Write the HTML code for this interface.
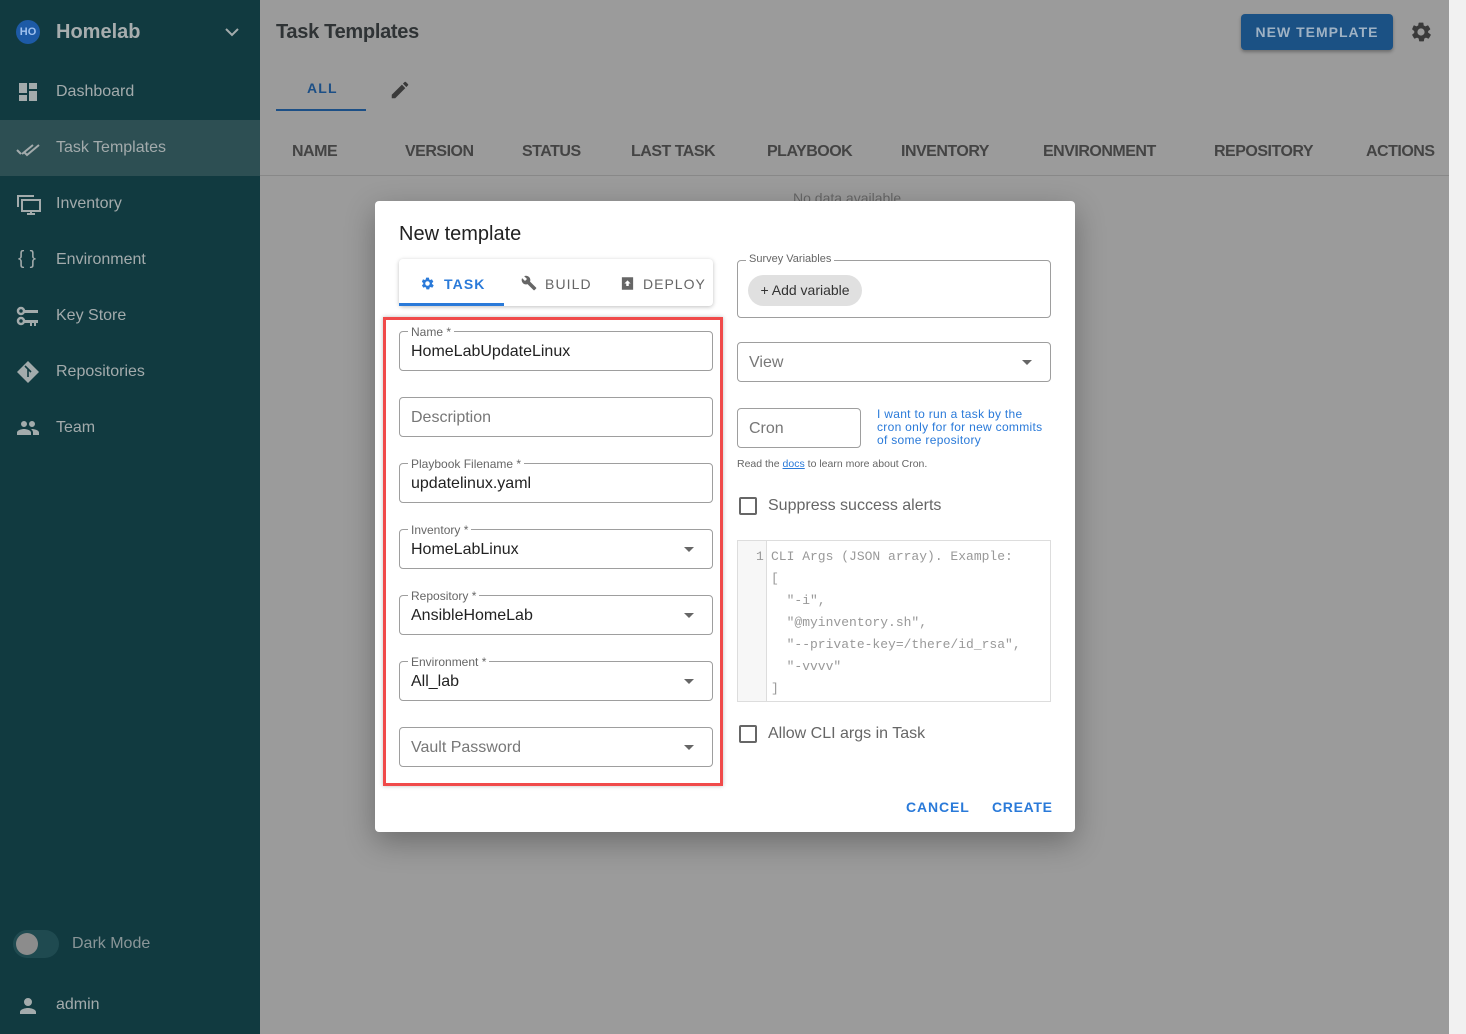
<!DOCTYPE html>
<html><head><meta charset="utf-8"><style>
*{box-sizing:border-box;margin:0;padding:0}
body{width:1466px;height:1034px;position:relative;overflow:hidden;font-family:"Liberation Sans",sans-serif;background:#9b9b9b}
.a{position:absolute}
.side{left:0;top:0;width:260px;height:1034px;background:#113a40}
.si{position:absolute;left:0;width:260px;height:56px;color:#a3abac;font-size:16px}
.si span{position:absolute;left:56px;top:20px}
.si svg{position:absolute;left:16px;top:17px}
.th{position:absolute;top:143px;font-size:16px;font-weight:bold;color:#444;letter-spacing:-.5px}
.dlg{left:375px;top:201px;width:700px;height:631px;background:#fff;border-radius:4px;box-shadow:0 10px 30px rgba(0,0,0,.3)}
.f{position:absolute;height:40px;border:1px solid #9e9e9e;border-radius:4px;font-size:16px;color:#222}
.f .v{position:absolute;left:11px;top:11px}
.f .p{position:absolute;left:11px;top:11px;color:#777}
.f .l{position:absolute;left:8px;top:-7px;background:#fff;padding:0 3px;font-size:12px;color:#666}
.f .dd{position:absolute;right:18px;top:17px;border-left:5px solid transparent;border-right:5px solid transparent;border-top:5px solid #666}
.cb{position:absolute;width:18px;height:18px;border:2px solid #666;border-radius:2px}
.code{font-family:"Liberation Mono",monospace;font-size:13px;color:#999;position:absolute;left:771px;white-space:pre}
</style></head><body>
<div class="a side">
  <div class="a" style="left:16px;top:20px;width:24px;height:24px;border-radius:50%;background:#1d5aa6;color:#9ec0ee;font-size:11px;font-weight:bold;text-align:center;line-height:24px">HO</div>
  <div class="a" style="left:56px;top:21px;font-size:20px;font-weight:bold;color:#a7adae">Homelab</div>
  <svg class="a" style="left:224px;top:26px" width="16" height="12" viewBox="0 0 16 12"><path d="M2 3l6 6 6-6" stroke="#a3abac" stroke-width="2" fill="none"/></svg>
  <div class="si" style="top:63px"><svg width="24" height="24" viewBox="0 0 24 24"><path fill="#a3abac" d="M3 13h8V3H3v10zm0 8h8v-6H3v6zm10 0h8V11h-8v10zm0-18v6h8V3h-8z"/></svg><span>Dashboard</span></div>
  <div class="si" style="top:120px;background:#2d4f53"><svg width="24" height="24" viewBox="0 0 24 24"><path fill="none" stroke="#a3abac" stroke-width="2" d="M1 13l4 4M6 17L17 8M8 15l3 3L23 8"/></svg><span style="top:19px">Task Templates</span></div>
  <div class="si" style="top:175px"><svg width="26" height="24" viewBox="0 0 26 24"><path fill="none" stroke="#a3abac" stroke-width="2" d="M2 15V4h16M6 8h18v11H6zM15 19v3M11 22h8"/></svg><span>Inventory</span></div>
  <div class="si" style="top:231px"><span style="left:18px;top:17px;font-size:19px">{ }</span><span>Environment</span></div>
  <div class="si" style="top:287px"><svg width="24" height="24" viewBox="0 0 24 24"><g fill="none" stroke="#a3abac" stroke-width="2.5"><circle cx="5" cy="7" r="3"/><circle cx="5" cy="17" r="3"/></g><path fill="#a3abac" d="M8 6h14v3H8zM8 16h14v3h-2v3h-2v-3h-2v3h-2v-3H8z"/></svg><span>Key Store</span></div>
  <div class="si" style="top:343px"><svg width="24" height="24" viewBox="0 0 24 24"><path fill="#a3abac" d="M12 1l11 11-11 11L1 12z"/><path stroke="#113a40" stroke-width="1.6" fill="none" d="M9 6l3 3v8M12 9l3 3"/></svg><span>Repositories</span></div>
  <div class="si" style="top:399px"><svg width="24" height="24" viewBox="0 0 24 24"><path fill="#a3abac" d="M16 11a3 3 0 1 0 0-6 3 3 0 0 0 0 6zm-8 0a3 3 0 1 0 0-6 3 3 0 0 0 0 6zm0 2c-2.3 0-7 1.2-7 3.5V19h14v-2.5C15 14.2 10.3 13 8 13zm8 0c-.3 0-.6 0-1 .1 1.2.8 2 2 2 3.4V19h6v-2.5c0-2.3-4.7-3.5-7-3.5z"/></svg><span>Team</span></div>
  <div class="a" style="left:13px;top:930px;width:46px;height:28px;border-radius:14px;background:#1f4a50"></div>
  <div class="a" style="left:16px;top:933px;width:22px;height:22px;border-radius:50%;background:#8c8c8c"></div>
  <div class="a" style="left:72px;top:935px;font-size:16px;color:#8a9698">Dark Mode</div>
  <div class="si" style="top:977px"><svg width="24" height="24" viewBox="0 0 24 24"><path fill="#a3abac" d="M12 12a4 4 0 1 0 0-8 4 4 0 0 0 0 8zm0 2c-2.7 0-8 1.3-8 4v2h16v-2c0-2.7-5.3-4-8-4z"/></svg><span style="top:19px">admin</span></div>
</div>

<div class="a" style="left:276px;top:21px;font-size:20px;font-weight:bold;color:#2f3335;letter-spacing:-.3px">Task Templates</div>
<div class="a" style="left:1241px;top:14px;width:152px;height:36px;background:#1b5184;border-radius:4px;box-shadow:0 2px 3px rgba(0,0,0,.3);color:#9fb2c4;font-size:14px;font-weight:bold;letter-spacing:1px;text-align:center;line-height:36px">NEW TEMPLATE</div>
<svg class="a" style="left:1409px;top:20px" width="24" height="24" viewBox="0 0 24 24"><path fill="#3a3a3a" d="M19.1 12.9c.1-.3.1-.6.1-.9s0-.6-.1-.9l2-1.6c.2-.1.2-.4.1-.6l-1.9-3.3c-.1-.2-.4-.3-.6-.2l-2.4 1c-.5-.4-1-.7-1.6-.9L14.4 3c0-.2-.2-.4-.5-.4h-3.8c-.2 0-.4.2-.5.4l-.4 2.5c-.6.2-1.1.6-1.6.9l-2.4-1c-.2-.1-.5 0-.6.2L3.2 8.9c-.1.2-.1.5.1.6l2 1.6c0 .3-.1.6-.1.9s0 .6.1.9l-2 1.6c-.2.1-.2.4-.1.6l1.9 3.3c.1.2.4.3.6.2l2.4-1c.5.4 1 .7 1.6.9l.4 2.5c0 .2.2.4.5.4h3.8c.2 0 .4-.2.5-.4l.4-2.5c.6-.2 1.1-.6 1.6-.9l2.4 1c.2.1.5 0 .6-.2l1.9-3.3c.1-.2.1-.5-.1-.6l-2.1-1.6zM12 15.6a3.6 3.6 0 1 1 0-7.2 3.6 3.6 0 0 1 0 7.2z"/></svg>
<div class="a" style="left:307px;top:80px;font-size:14px;color:#1c4f86;letter-spacing:1.2px;font-weight:bold">ALL</div>
<div class="a" style="left:276px;top:109px;width:90px;height:2px;background:#1c4f86"></div>
<svg class="a" style="left:389px;top:79px" width="22" height="22" viewBox="0 0 24 24"><path fill="#3a3a3a" d="M3 17.2V21h3.8L17.8 9.9l-3.7-3.7L3 17.2zM20.7 7c.4-.4.4-1 0-1.4l-2.3-2.3c-.4-.4-1-.4-1.4 0l-1.8 1.8 3.7 3.7L20.7 7z"/></svg>
<div class="th" style="left:292px">NAME</div><div class="th" style="left:405px">VERSION</div><div class="th" style="left:522px">STATUS</div><div class="th" style="left:631px">LAST TASK</div><div class="th" style="left:767px">PLAYBOOK</div><div class="th" style="left:901px">INVENTORY</div><div class="th" style="left:1043px">ENVIRONMENT</div><div class="th" style="left:1214px">REPOSITORY</div><div class="th" style="left:1366px">ACTIONS</div>
<div class="a" style="left:260px;top:175px;width:1189px;height:1px;background:#888"></div>
<div class="a" style="left:793px;top:190px;font-size:14px;color:#666">No data available</div>
<div class="a" style="left:1449px;top:0;width:17px;height:1034px;background:#f1f1f1"></div>

<div class="a dlg"></div>
<div class="a" style="left:399px;top:223px;font-size:20px;color:#222">New template</div>
<div class="a" style="left:399px;top:259px;width:314px;height:47px;background:#fff;border-radius:4px;box-shadow:0 1px 4px rgba(0,0,0,.25)"></div>
<div class="a" style="left:399px;top:303px;width:105px;height:3px;background:#2a7ad9"></div>
<svg class="a" style="left:420px;top:276px" width="15" height="15" viewBox="0 0 24 24"><path fill="#2a7ad9" d="M19.1 12.9c.1-.3.1-.6.1-.9s0-.6-.1-.9l2-1.6c.2-.1.2-.4.1-.6l-1.9-3.3c-.1-.2-.4-.3-.6-.2l-2.4 1c-.5-.4-1-.7-1.6-.9L14.4 3c0-.2-.2-.4-.5-.4h-3.8c-.2 0-.4.2-.5.4l-.4 2.5c-.6.2-1.1.6-1.6.9l-2.4-1c-.2-.1-.5 0-.6.2L3.2 8.9c-.1.2-.1.5.1.6l2 1.6c0 .3-.1.6-.1.9s0 .6.1.9l-2 1.6c-.2.1-.2.4-.1.6l1.9 3.3c.1.2.4.3.6.2l2.4-1c.5.4 1 .7 1.6.9l.4 2.5c0 .2.2.4.5.4h3.8c.2 0 .4-.2.5-.4l.4-2.5c.6-.2 1.1-.6 1.6-.9l2.4 1c.2.1.5 0 .6-.2l1.9-3.3c.1-.2.1-.5-.1-.6l-2.1-1.6zM12 15.6a3.6 3.6 0 1 1 0-7.2 3.6 3.6 0 0 1 0 7.2z"/></svg>
<div class="a" style="left:444px;top:276px;font-size:14px;color:#2a7ad9;letter-spacing:1.1px;font-weight:bold">TASK</div>
<svg class="a" style="left:521px;top:275px" width="16" height="16" viewBox="0 0 24 24"><path fill="#666" d="M22.7 19l-9.1-9.1c.9-2.3.4-5-1.5-6.9-2-2-5-2.4-7.4-1.3L9 6 6 9 1.6 4.7C.4 7.1.9 10.1 2.9 12.1c1.9 1.9 4.6 2.4 6.9 1.5l9.1 9.1c.4.4 1 .4 1.4 0l2.3-2.3c.5-.4.5-1.1.1-1.4z"/></svg>
<div class="a" style="left:545px;top:276px;font-size:14px;color:#666;letter-spacing:1.1px">BUILD</div>
<svg class="a" style="left:620px;top:276px" width="15" height="15" viewBox="0 0 24 24"><path fill="#666" d="M3 2h18v20H3z"/><path fill="#fff" d="M12 7l-5 5h3v4h4v-4h3z"/></svg>
<div class="a" style="left:643px;top:276px;font-size:14px;color:#666;letter-spacing:1px">DEPLOY</div>

<div class="a" style="left:383px;top:317px;width:340px;height:469px;border:3px solid #f04a4a;box-shadow:0 0 4px rgba(0,0,0,.25)"></div>
<div class="f" style="left:399px;top:331px;width:314px"><span class="l">Name *</span><span class="v">HomeLabUpdateLinux</span></div>
<div class="f" style="left:399px;top:397px;width:314px"><span class="p">Description</span></div>
<div class="f" style="left:399px;top:463px;width:314px"><span class="l">Playbook Filename *</span><span class="v">updatelinux.yaml</span></div>
<div class="f" style="left:399px;top:529px;width:314px"><span class="l">Inventory *</span><span class="v">HomeLabLinux</span><span class="dd"></span></div>
<div class="f" style="left:399px;top:595px;width:314px"><span class="l">Repository *</span><span class="v">AnsibleHomeLab</span><span class="dd"></span></div>
<div class="f" style="left:399px;top:661px;width:314px"><span class="l">Environment *</span><span class="v">All_lab</span><span class="dd"></span></div>
<div class="f" style="left:399px;top:727px;width:314px"><span class="p">Vault Password</span><span class="dd"></span></div>

<div class="f" style="left:737px;top:260px;width:314px;height:58px"><span class="l" style="font-size:11px;top:-8px">Survey Variables</span></div>
<div class="a" style="left:748px;top:275px;width:114px;height:31px;border-radius:16px;background:#e0e0e0;font-size:14px;color:#333;text-align:center;line-height:31px">+ Add variable</div>
<div class="f" style="left:737px;top:342px;width:314px"><span class="p">View</span><span class="dd"></span></div>
<div class="f" style="left:737px;top:408px;width:124px"><span class="p">Cron</span></div>
<div class="a" style="left:877px;top:408px;font-size:12px;line-height:13px;color:#2a7ad9;letter-spacing:.3px">I want to run a task by the<br>cron only for for new commits<br>of some repository</div>
<div class="a" style="left:737px;top:458px;font-size:10.5px;color:#666">Read the <u style="color:#2a7ad9">docs</u> to learn more about Cron.</div>
<div class="cb" style="left:739px;top:497px"></div>
<div class="a" style="left:768px;top:497px;font-size:16px;color:#666">Suppress success alerts</div>
<div class="a" style="left:737px;top:540px;width:314px;height:162px;border:1px solid #ddd"></div>
<div class="a" style="left:738px;top:541px;width:29px;height:160px;background:#f7f7f7;border-right:1px solid #ddd"></div>
<div class="code" style="left:756px;top:549px">1</div>
<div class="code" style="top:549px">CLI Args (JSON array). Example:</div>
<div class="code" style="top:571px">[</div>
<div class="code" style="top:593px">  "-i",</div>
<div class="code" style="top:615px">  "@myinventory.sh",</div>
<div class="code" style="top:637px">  "--private-key=/there/id_rsa",</div>
<div class="code" style="top:659px">  "-vvvv"</div>
<div class="code" style="top:681px">]</div>
<div class="cb" style="left:739px;top:725px"></div>
<div class="a" style="left:768px;top:725px;font-size:16px;color:#666">Allow CLI args in Task</div>
<div class="a" style="left:906px;top:799px;font-size:14px;color:#2a7ad9;letter-spacing:.9px;font-weight:bold">CANCEL</div>
<div class="a" style="left:992px;top:799px;font-size:14px;color:#2a7ad9;letter-spacing:.7px;font-weight:bold">CREATE</div>
</body></html>
